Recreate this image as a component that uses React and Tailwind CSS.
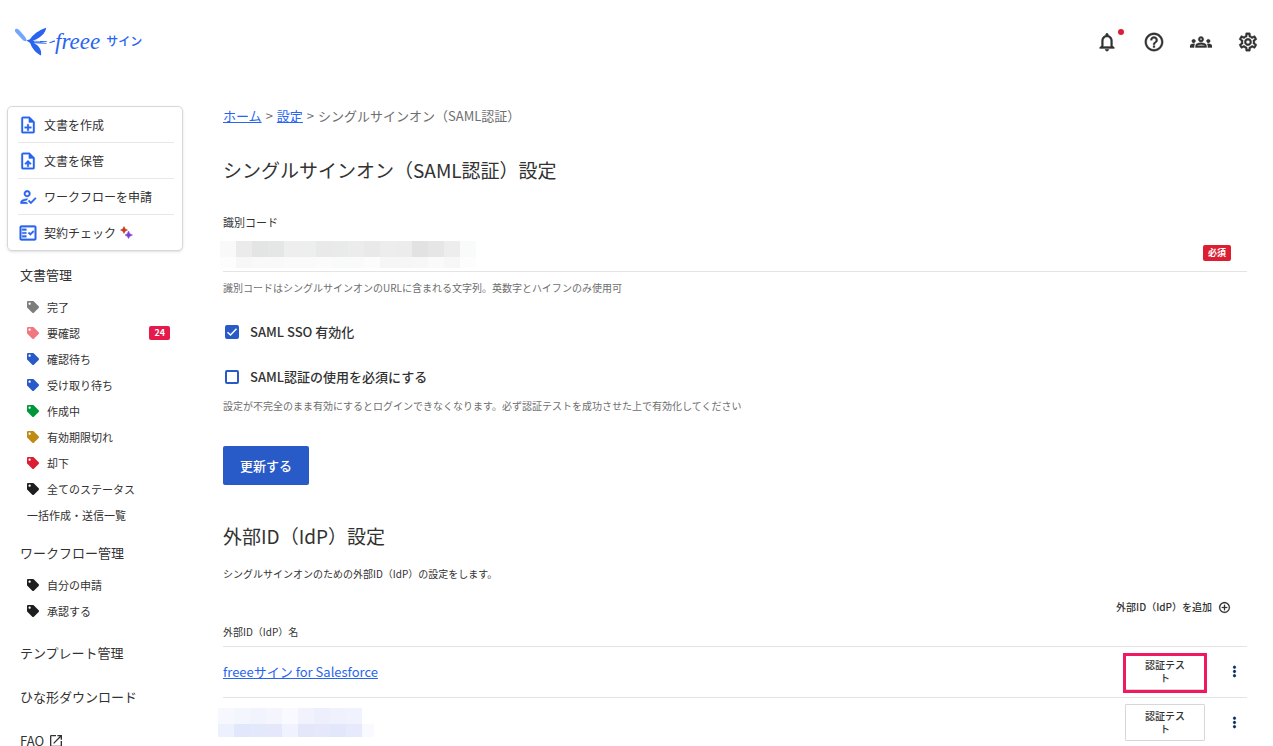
import React, { useState } from "react"
import {
  MdOutlineNotifications,
  MdHelpOutline,
  MdOutlineGroups,
  MdOutlineSettings,
  MdOutlineNoteAdd,
  MdOutlineUploadFile,
  MdOutlineHowToReg,
  MdOutlineFactCheck,
  MdOpenInNew,
  MdAddCircleOutline,
  MdMoreVert,
} from "react-icons/md"
import { FaTag } from "react-icons/fa"

const quickActions = [
  { label: "文書を作成", icon: MdOutlineNoteAdd },
  { label: "文書を保管", icon: MdOutlineUploadFile },
  { label: "ワークフローを申請", icon: MdOutlineHowToReg },
  { label: "契約チェック", icon: MdOutlineFactCheck, sparkle: true },
]

const statuses = [
  { label: "完了", color: "text-[#7d7d7d]" },
  { label: "要確認", color: "text-[#f0787f]", count: 24 },
  { label: "確認待ち", color: "text-[#285ac8]" },
  { label: "受け取り待ち", color: "text-[#285ac8]" },
  { label: "作成中", color: "text-[#00963c]" },
  { label: "有効期限切れ", color: "text-[#be8c14]" },
  { label: "却下", color: "text-[#dc1e32]" },
  { label: "全てのステータス", color: "text-[#1e1e1e]" },
  { label: "一括作成・送信一覧" },
]

const workflows = [
  { label: "自分の申請", color: "text-[#1e1e1e]" },
  { label: "承認する", color: "text-[#1e1e1e]" },
]

function Logo() {
  return (
    <a href="#" aria-label="freee サイン" className="flex items-center text-[#2864f0]">
      <svg width="40" height="32" viewBox="0 0 40 32" fill="currentColor" aria-hidden="true">
        <path d="M0 3.500C.8 2.200 3 2.600 4.600 4.400L10 10.800C11.300 12.700 12 14.200 11.300 15C10.300 15.600 8.500 14.800 7.300 13.500L1 6.700C.1 5.700-.3 4.500 0 3.500Z" fill="#73a5ff" />
        <path d="M11.500 14.600L15 13.200C18 8.500 24 4 31.200 1.700C30.800 6 27 10.500 21 13.400L17.500 14.800L32 15.200L32 15.900L24 16.300L31.500 17L31.500 17.700L19 17.300C24 19.500 27 24 26 29.600C21 27 17 22.500 15.500 17.800L14.500 16.600Z" />
        <path d="M19 15.900L25 15.800" stroke="#fff" strokeWidth=".6" />
        <path d="M34.500 16.800C37 16 38.500 15.400 40 15.200" fill="none" stroke="currentColor" strokeWidth="1.200" />
      </svg>
      <span className="font-['Liberation_Serif',serif] text-[23px] leading-8 italic">freee</span>
      <span className="ml-1.5 pb-0.5 text-xs font-medium">サイン</span>
    </a>
  )
}

function Sparkles() {
  return (
    <svg width="13" height="13" viewBox="0 0 13 13" className="ml-1" aria-hidden="true">
      <path d="M4 .5Q4.600 3.400 7.500 4Q4.600 4.600 4 7.500Q3.400 4.600 .5 4Q3.400 3.400 4 .5Z" fill="#c83c1e" stroke="#c83c1e" strokeWidth=".5" />
      <path d="M8.500 5Q9.200 8.300 12.500 9Q9.200 9.700 8.500 12.500Q7.800 9.700 5 9Q7.800 8.300 8.500 5Z" fill="#7d3cdc" stroke="#7d3cdc" strokeWidth=".5" />
    </svg>
  )
}

// Material icons carry an empty bounding path, hide it so only the glyph gets the extra stroke
function BoldIcon({ icon: Icon, size, className = "" }) {
  return (
    <span className={`flex [&_path[fill=none]]:hidden ${className}`}>
      <Icon size={size} strokeWidth=".4" />
    </span>
  )
}

function Header() {
  return (
    <header className="flex h-[84px] items-center justify-between pr-[14px] pl-[15px]">
      <Logo />
      <div className="flex items-center gap-[25px] text-[#323232]">
        <button type="button" aria-label="通知" className="relative">
          <BoldIcon icon={MdOutlineNotifications} size={22} />
          <span className="absolute -top-0.5 -right-1.5 size-1.5 rounded-full bg-[#dc1e32]" />
        </button>
        <button type="button" aria-label="ヘルプ">
          <BoldIcon icon={MdHelpOutline} size={22} />
        </button>
        <button type="button" aria-label="メンバー">
          <BoldIcon icon={MdOutlineGroups} size={22} />
        </button>
        <button type="button" aria-label="設定">
          <BoldIcon icon={MdOutlineSettings} size={22} />
        </button>
      </div>
    </header>
  )
}

function TagList({ items }) {
  return (
    <ul className="mt-[9px]">
      {items.map((item) => (
        <li key={item.label}>
          <a href="#" className="flex h-[26px] items-center gap-2 pr-[13px] pl-5 text-[11px]">
            {item.color && <FaTag size={12} className={item.color} />}
            <span>{item.label}</span>
            {item.count && (
              <span className="ml-auto rounded-xs bg-[#e6194b] px-[5px] text-[9px] leading-[14px] font-bold text-white">{item.count}</span>
            )}
          </a>
        </li>
      ))}
    </ul>
  )
}

function Sidebar() {
  return (
    <nav className="w-44 shrink-0 pt-[22px]">
      <ul className="rounded-[5px] border border-[#d7d7d7] pr-2 pl-[10px] shadow-sm">
        {quickActions.map(({ label, icon, sparkle }) => (
          <li key={label} className="border-b border-[#e9e7e7] last:border-b-0">
            <a href="#" className="flex h-[35px] items-center text-xs">
              <BoldIcon icon={icon} size={20} className="mr-1.5 text-[#2864f0]" />
              {label}
              {sparkle && <Sparkles />}
            </a>
          </li>
        ))}
      </ul>
      <h2 className="mt-[14px] pl-[13px] text-[13px] leading-5">文書管理</h2>
      <TagList items={statuses} />
      <h2 className="mt-[15px] pl-[13px] text-[13px] leading-5">ワークフロー管理</h2>
      <TagList items={workflows} />
      <a href="#" className="mt-[19px] block pl-[13px] text-[13px] leading-5">テンプレート管理</a>
      <a href="#" className="mt-6 block pl-[13px] text-[13px] leading-5">ひな形ダウンロード</a>
      <a href="#" className="mt-6 flex items-center gap-1 pl-[13px] text-[13px] leading-5">
        FAQ
        <MdOpenInNew size={16} />
      </a>
    </nav>
  )
}

// Blurred-out value, drawn as two rows of blocks
function CodeMosaic() {
  return (
    <div className="pointer-events-none absolute top-[11px] -left-[3px]" aria-hidden="true">
      <div className="flex *:h-4 *:w-4">
        <i className="bg-[#f9f9f9]" />
        <i className="bg-[#ebebeb]" />
        <i className="bg-[#e3e5e4]" />
        <i className="bg-[#e5e7e6]" />
        <i className="bg-[#eeeeee]" />
        <i className="bg-[#edefee]" />
        <i className="bg-[#e9e9e9]" />
        <i className="bg-[#e9ebea]" />
        <i className="bg-[#ececec]" />
        <i className="bg-[#e9e9e9]" />
        <i className="bg-[#ededed]" />
        <i className="bg-[#ececec]" />
        <i className="bg-[#e2e2e2]" />
        <i className="bg-[#e7e6e7]" />
        <i className="bg-[#eeedee]" />
        <i className="bg-[#f9fbfa]" />
      </div>
      <div className="flex *:h-[11px] *:w-4">
        <i className="bg-[#fdfdfd]" />
        <i className="bg-[#f7f7f7]" />
        <i className="bg-[#f9f9f9]" />
        <i className="bg-[#f9f9f9]" />
        <i className="bg-[#fafafa]" />
        <i className="bg-[#fafafa]" />
        <i className="bg-[#fbfbfb]" />
        <i className="bg-[#f8fbfa]" />
        <i className="bg-[#fafafa]" />
        <i className="bg-[#fcfcfc]" />
        <i className="bg-[#f6f6f6]" />
        <i className="bg-[#f6f6f6]" />
        <i className="bg-[#f7f7f7]" />
        <i className="bg-[#fafafa]" />
        <i className="bg-[#f7f7f7]" />
        <i className="bg-[#fdfdfd]" />
      </div>
    </div>
  )
}

function NameMosaic() {
  return (
    <div className="-ml-[5px]" aria-hidden="true">
      <div className="flex *:h-4 *:w-4">
        <i className="bg-[#f7f8fe]" />
        <i className="bg-[#f4f6fd]" />
        <i className="bg-[#f1f4fd]" />
        <i className="bg-[#f4f5fd]" />
        <i className="bg-[#f9faff]" />
        <i className="bg-[#f2f2fc]" />
        <i className="bg-[#eeeffc]" />
        <i className="bg-[#eff1fd]" />
        <i className="bg-[#f0f2fd]" />
      </div>
      <div className="flex *:h-[13px] *:w-4 *:last:w-3">
        <i className="bg-[#edf0fd]" />
        <i className="bg-[#e2e8fc]" />
        <i className="bg-[#e3e8fb]" />
        <i className="bg-[#e5e8fb]" />
        <i className="bg-[#f0f2fd]" />
        <i className="bg-[#e4e7fa]" />
        <i className="bg-[#e5e8fb]" />
        <i className="bg-[#e3e7fc]" />
        <i className="bg-[#e6eafc]" />
        <i className="bg-[#f9faff]" />
      </div>
    </div>
  )
}

function Checkbox({ id, label, checked, onChange }) {
  return (
    <div className="flex h-5 items-center gap-[11px] pl-0.5">
      <span className="relative size-[14px]">
        <input
          id={id}
          type="checkbox"
          checked={checked}
          onChange={onChange}
          className="block size-[14px] appearance-none rounded-xs border-2 border-[#285ac8] bg-white checked:bg-[#285ac8]"
        />
        {checked && (
          <svg viewBox="0 0 14 14" className="pointer-events-none absolute inset-0" fill="none" stroke="#fff" strokeWidth="1.500" aria-hidden="true">
            <path d="M2.500 7.200L5.500 10L11.500 3.800" />
          </svg>
        )}
      </span>
      <label htmlFor={id} className="text-[13px] font-medium">{label}</label>
    </div>
  )
}

function RowActions({ highlighted }) {
  return (
    <div className="flex items-center justify-end gap-[17px]">
      <div className="relative">
        <button type="button" className="block w-20 rounded-[1px] border border-[#d7d7d7] px-4 pt-1 pb-[5px] text-[10px] leading-[13px] font-medium">
          認証テスト
        </button>
        {highlighted && <span className="pointer-events-none absolute -inset-x-0.5 top-0 -bottom-[3px] border-3 border-[#f0195f]" />}
      </div>
      <button type="button" aria-label="メニュー" className="flex w-6 justify-center text-[#0a2d5f]">
        <BoldIcon icon={MdMoreVert} size={17} />
      </button>
    </div>
  )
}

function App() {
  const [enabled, setEnabled] = useState(true)
  const [required, setRequired] = useState(false)

  return (
    <div className="min-h-screen bg-white font-['Noto_Sans_CJK_JP',sans-serif] text-[#323232]">
      <Header />
      <div className="flex gap-10 pr-[26px] pl-[7px]">
        <Sidebar />
        <main className="min-w-0 flex-1 pt-[22px]">
          <div className="text-[13px] leading-5 text-[#6e6e6e]">
            <a href="#" className="text-[#2864f0] underline">ホーム</a>
            <span className="px-1">&gt;</span>
            <a href="#" className="text-[#2864f0] underline">設定</a>
            <span className="px-1">&gt;</span>
            シングルサインオン（SAML認証）
          </div>
          <h1 className="mt-[30px] text-[19px] leading-7">シングルサインオン（SAML認証）設定</h1>

          <form onSubmit={(e) => e.preventDefault()}>
            <label htmlFor="code" className="mt-[30px] block text-[11px] leading-4">識別コード</label>
            <div className="relative flex h-[42px] items-center border-b border-[#e4e4e4] pt-1 pr-4">
              <input id="code" type="text" className="min-w-0 flex-1 text-[13px] outline-none" />
              <span className="rounded-xs bg-[#dc1e32] px-[5px] text-[9px] leading-4 font-bold text-white">必須</span>
              <CodeMosaic />
            </div>
            <p className="mt-2 text-[10px] leading-4 text-[#6e6e6e]">識別コードはシングルサインオンのURLに含まれる文字列。英数字とハイフンのみ使用可</p>

            <div className="mt-[26px] flex flex-col gap-[25px]">
              <Checkbox id="sso" label="SAML SSO 有効化" checked={enabled} onChange={(e) => setEnabled(e.target.checked)} />
              <Checkbox id="force" label="SAML認証の使用を必須にする" checked={required} onChange={(e) => setRequired(e.target.checked)} />
            </div>
            <p className="mt-[11px] text-[10px] leading-4 text-[#6e6e6e]">
              設定が不完全のまま有効にするとログインできなくなります。必ず認証テストを成功させた上で有効化してください
            </p>
            <button type="submit" className="mt-8 block h-[39px] rounded-xs bg-[#285ac8] px-[17px] text-[13px] font-medium text-white">
              更新する
            </button>
          </form>

          <h2 className="mt-[37px] text-[19px] leading-7">外部ID（IdP）設定</h2>
          <p className="mt-4 text-[10px] leading-4">シングルサインオンのための外部ID（IdP）の設定をします。</p>
          <div className="mt-[17px] flex justify-end pr-4">
            <button type="button" className="flex items-center gap-1.5 text-[10px] leading-4 font-medium">
              外部ID（IdP）を追加
              <BoldIcon icon={MdAddCircleOutline} size={13} />
            </button>
          </div>
          <table className="w-full border-collapse text-left">
            <thead>
              <tr className="h-[31px] border-b border-[#e4e4e4] text-[10px]">
                <th className="pt-0.5 font-normal">外部ID（IdP）名</th>
                <th />
              </tr>
            </thead>
            <tbody>
              <tr className="h-[51px] border-b border-[#e4e4e4]">
                <td className="text-[13px]">
                  <a href="#" className="text-[#2864f0] underline">freeeサイン for Salesforce</a>
                </td>
                <td className="pr-px">
                  <RowActions highlighted />
                </td>
              </tr>
              <tr className="h-[51px] border-b border-[#e4e4e4]">
                <td>
                  <NameMosaic />
                </td>
                <td className="pr-px">
                  <RowActions />
                </td>
              </tr>
            </tbody>
          </table>
        </main>
      </div>
    </div>
  )
}

export default App
